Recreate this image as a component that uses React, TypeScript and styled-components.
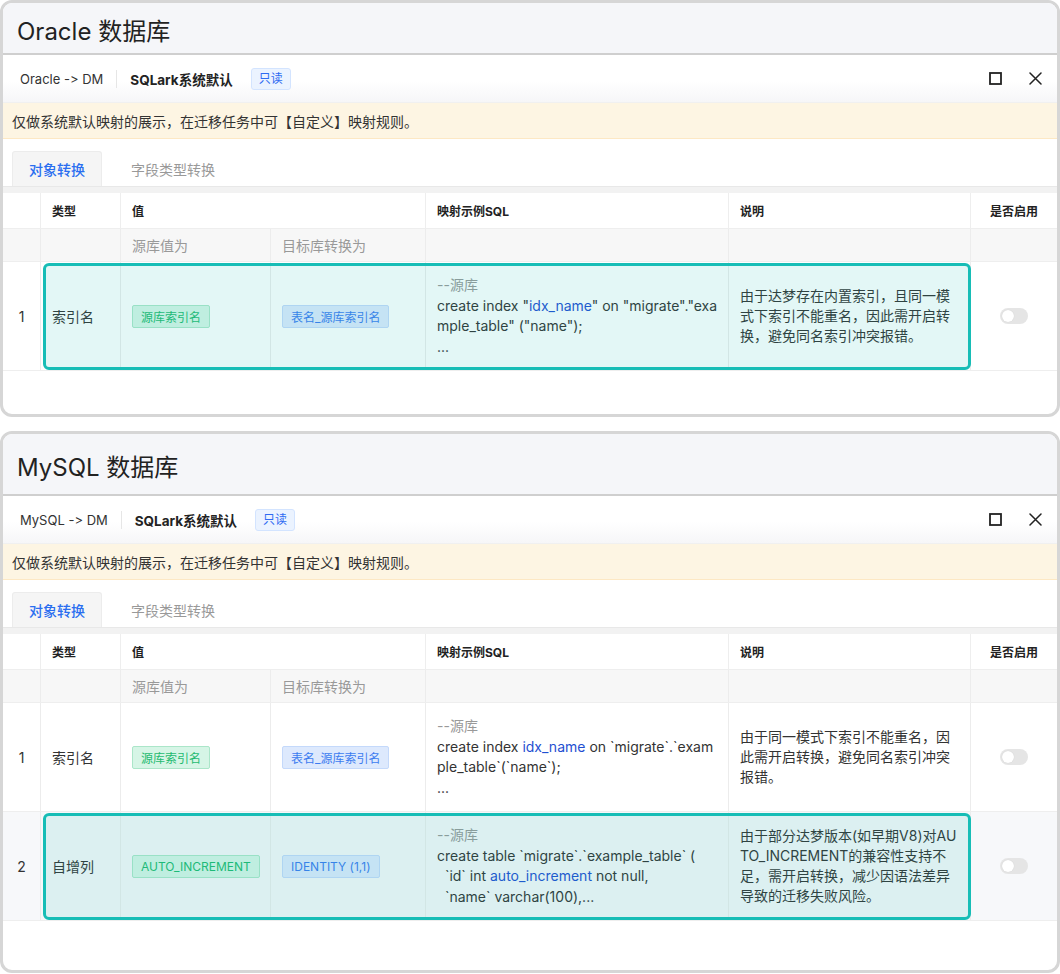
import React from 'react';
import styled, { createGlobalStyle } from 'styled-components';

const GlobalStyle = createGlobalStyle`
  * { box-sizing: border-box; }
  body {
    margin: 0;
    background: #ffffff;
    font-family: Inter, "Noto Sans CJK SC", sans-serif;
    font-feature-settings: "liga" 0, "calt" 0;
    color: #333;
  }
`;

type Row = {
  type: string;
  source: string;
  target: string;
  sql: React.ReactNode[];
  desc: string[];
  highlighted?: boolean;
  striped?: boolean;
};

type Section = {
  title: string;
  route: string;
  titleHeight: number;
  bottomGap: number;
  rows: Row[];
};

const Kw = styled.span`
  color: #1f4fd1;
`;

const sections: Section[] = [
  {
    title: 'Oracle 数据库',
    route: 'Oracle -> DM',
    titleHeight: 52,
    bottomGap: 43,
    rows: [
      {
        type: '索引名',
        source: '源库索引名',
        target: '表名_源库索引名',
        highlighted: true,
        sql: [
          <>create index "<Kw>idx_name</Kw>" on "migrate"."exa</>,
          <>mple_table" ("name");</>,
          <>...</>,
        ],
        desc: ['由于达梦存在内置索引，且同一模', '式下索引不能重名，因此需开启转', '换，避免同名索引冲突报错。'],
      },
    ],
  },
  {
    title: 'MySQL 数据库',
    route: 'MySQL -> DM',
    titleHeight: 62,
    bottomGap: 49,
    rows: [
      {
        type: '索引名',
        source: '源库索引名',
        target: '表名_源库索引名',
        sql: [
          <>create index <Kw>idx_name</Kw> on `migrate`.`exam</>,
          <>ple_table`(`name`);</>,
          <>...</>,
        ],
        desc: ['由于同一模式下索引不能重名，因', '此需开启转换，避免同名索引冲突', '报错。'],
      },
      {
        type: '自增列',
        source: 'AUTO_INCREMENT',
        target: 'IDENTITY (1,1)',
        highlighted: true,
        striped: true,
        sql: [
          <>create table `migrate`.`example_table` (</>,
          <>  `id` int <Kw>auto_increment</Kw> not null,</>,
          <>  `name` varchar(100),...</>,
        ],
        desc: ['由于部分达梦版本(如早期V8)对AU', 'TO_INCREMENT的兼容性支持不', '足，需开启转换，减少因语法差异', '导致的迁移失败风险。'],
      },
    ],
  },
];

const COLUMNS = '38px 80px 150px 155px 303px 242px 1fr';

export default function App() {
  return (
    <>
      <GlobalStyle />
      <Styled.Page>
        {sections.map((section) => (
          <Styled.Panel key={section.title}>
            <Styled.Title $height={section.titleHeight}>{section.title}</Styled.Title>

            <Styled.DialogHeader>
              <Styled.Route>{section.route}</Styled.Route>
              <Styled.Divider />
              <Styled.Strategy>SQLark系统默认</Styled.Strategy>
              <Styled.ReadOnly>只读</Styled.ReadOnly>
              <Styled.Actions>
                <svg width="13" height="13" viewBox="0 0 13 13">
                  <rect x="1" y="1" width="11" height="11" fill="none" stroke="#222" strokeWidth="1.8" />
                </svg>
                <svg width="13" height="13" viewBox="0 0 13 13">
                  <path d="M1 1 L12 12 M12 1 L1 12" stroke="#222" strokeWidth="1.5" strokeLinecap="round" />
                </svg>
              </Styled.Actions>
            </Styled.DialogHeader>

            <Styled.Notice>仅做系统默认映射的展示，在迁移任务中可【自定义】映射规则。</Styled.Notice>

            <Styled.Tabs>
              <Styled.Tab $active>对象转换</Styled.Tab>
              <Styled.Tab>字段类型转换</Styled.Tab>
            </Styled.Tabs>
            <Styled.Strip />

            <Styled.HeadRow>
              <Styled.HeadCell />
              <Styled.HeadCell>类型</Styled.HeadCell>
              <Styled.HeadCell $span={2}>值</Styled.HeadCell>
              <Styled.HeadCell>映射示例SQL</Styled.HeadCell>
              <Styled.HeadCell>说明</Styled.HeadCell>
              <Styled.HeadCell $center>是否启用</Styled.HeadCell>
            </Styled.HeadRow>
            <Styled.SubHeadRow>
              <Styled.SubCell />
              <Styled.SubCell />
              <Styled.SubCell>源库值为</Styled.SubCell>
              <Styled.SubCell>目标库转换为</Styled.SubCell>
              <Styled.SubCell />
              <Styled.SubCell />
              <Styled.SubCell />
            </Styled.SubHeadRow>

            {section.rows.map((row, i) => (
              <Styled.DataRow key={row.type} $striped={row.striped}>
                <Styled.Cell $center>{i + 1}</Styled.Cell>
                <Styled.Cell>{row.type}</Styled.Cell>
                <Styled.Cell>
                  <Styled.Tag $tone="green">{row.source}</Styled.Tag>
                </Styled.Cell>
                <Styled.Cell>
                  <Styled.Tag $tone="blue">{row.target}</Styled.Tag>
                </Styled.Cell>
                <Styled.Cell>
                  <Styled.Code>
                    <Styled.Comment>--源库</Styled.Comment>
                    {row.sql.map((line, j) => (
                      <Styled.CodeLine key={j}>{line}</Styled.CodeLine>
                    ))}
                  </Styled.Code>
                </Styled.Cell>
                <Styled.Cell>
                  <Styled.Desc>
                    {row.desc.map((line) => (
                      <div key={line}>{line}</div>
                    ))}
                  </Styled.Desc>
                </Styled.Cell>
                <Styled.Cell $center>
                  <Styled.Switch>
                    <Styled.Knob />
                  </Styled.Switch>
                </Styled.Cell>
                {row.highlighted && <Styled.Highlight />}
              </Styled.DataRow>
            ))}

            <Styled.Spacer $height={section.bottomGap} />
          </Styled.Panel>
        ))}
      </Styled.Page>
    </>
  );
}

const Styled = {
  Page: styled.main`
    display: flex;
    flex-direction: column;
    gap: 14px;
    width: 1060px;
  `,

  Panel: styled.section`
    display: flex;
    flex-direction: column;
    border: 3px solid #d6d6d6;
    border-radius: 12px;
    overflow: hidden;
    background: #fff;
  `,

  Title: styled.h2<{ $height: number }>`
    display: flex;
    align-items: center;
    height: ${({ $height }) => $height}px;
    margin: 0;
    padding: 2px 0 0 14px;
    background: #f5f6f9;
    border-bottom: 2px solid #cfcfcf;
    font-size: 24px;
    font-weight: 400;
    color: #222;
  `,

  DialogHeader: styled.div`
    display: flex;
    align-items: center;
    height: 48px;
    padding: 0 15px 0 17px;
    background: linear-gradient(#ffffff 55%, #f6f6f8);
    border-bottom: 1px solid #f0f0f0;
  `,

  Route: styled.span`
    font-size: 13px;
    color: #333;
  `,

  Divider: styled.span`
    width: 1px;
    height: 18px;
    margin: 0 13px 0 13px;
    background: #e6e6e6;
  `,

  Strategy: styled.span`
    font-size: 13.5px;
    font-weight: 700;
    color: #222;
  `,

  ReadOnly: styled.span`
    margin-left: 18px;
    padding: 2px 7px;
    font-size: 12px;
    line-height: 16px;
    color: #2f6bf2;
    background: #ebf3ff;
    border: 1px solid #d3e4ff;
    border-radius: 3px;
  `,

  Actions: styled.div`
    display: flex;
    align-items: center;
    gap: 27px;
    margin-left: auto;
  `,

  Notice: styled.div`
    display: flex;
    align-items: center;
    height: 36px;
    padding-left: 9px;
    font-size: 14px;
    color: #333;
    background: #fdf5e3;
    border-bottom: 1px solid #fde8c4;
  `,

  Tabs: styled.div`
    display: flex;
    padding: 12px 9px 0;
  `,

  Tab: styled.div<{ $active?: boolean }>`
    display: flex;
    align-items: center;
    height: 35px;
    padding: 0 16px;
    margin-right: 12px;
    font-size: 14px;
    font-weight: ${({ $active }) => ($active ? 500 : 400)};
    color: ${({ $active }) => ($active ? '#2a6ef0' : '#999')};
    background: ${({ $active }) => ($active ? '#f5f5f5' : 'transparent')};
    border: 1px solid ${({ $active }) => ($active ? '#ececec' : 'transparent')};
    border-bottom: none;
    border-radius: 3px 3px 0 0;
  `,

  Strip: styled.div`
    height: 7px;
    background: #f2f2f2;
    border-top: 1px solid #e8e8e8;
  `,

  HeadRow: styled.div`
    display: grid;
    grid-template-columns: ${COLUMNS};
    height: 36px;
    border-bottom: 1px solid #eeeeee;
  `,

  HeadCell: styled.div<{ $span?: number; $center?: boolean }>`
    display: flex;
    align-items: center;
    justify-content: ${({ $center }) => ($center ? 'center' : 'flex-start')};
    grid-column: span ${({ $span }) => $span ?? 1};
    padding: 0 11px;
    font-size: 12px;
    font-weight: 700;
    color: #222;
    border-right: 1px solid #eeeeee;

    &:last-child {
      border-right: none;
    }
  `,

  SubHeadRow: styled.div`
    display: grid;
    grid-template-columns: ${COLUMNS};
    height: 33px;
    background: #f7f7f7;
    border-bottom: 1px solid #eeeeee;
  `,

  SubCell: styled.div`
    display: flex;
    align-items: center;
    padding: 0 11px;
    font-size: 14px;
    color: #999;
    border-right: 1px solid #ececec;

    &:last-child {
      border-right: none;
    }
  `,

  DataRow: styled.div<{ $striped?: boolean }>`
    display: grid;
    grid-template-columns: ${COLUMNS};
    min-height: 109px;
    background: ${({ $striped }) => ($striped ? '#f7f8fa' : '#ffffff')};
    border-bottom: 1px solid #eeeeee;

    ${[1, 2, 3, 4, 5, 6, 7].map((n) => `& > :nth-child(${n}) { grid-column: ${n}; }`).join('\n')}
  `,

  Cell: styled.div<{ $center?: boolean }>`
    display: flex;
    align-items: center;
    justify-content: ${({ $center }) => ($center ? 'center' : 'flex-start')};
    grid-row: 1;
    padding: 0 11px;
    font-size: 14px;
    color: #333;
    border-right: 1px solid #ececec;

    &:nth-child(7) {
      border-right: none;
    }
  `,

  Tag: styled.span<{ $tone: 'green' | 'blue' }>`
    display: inline-flex;
    align-items: center;
    height: 23px;
    padding: 0 8px;
    font-size: 12px;
    border-radius: 2px;
    white-space: nowrap;
    color: ${({ $tone }) => ($tone === 'green' ? '#1fba70' : '#3c7cf0')};
    background: ${({ $tone }) => ($tone === 'green' ? '#d6f5e6' : '#dde9fd')};
    border: 1px solid ${({ $tone }) => ($tone === 'green' ? '#abe6c9' : '#c4d9fb')};
  `,

  Code: styled.div`
    font-size: 14px;
    line-height: 20.5px;
    color: #333;
  `,

  Comment: styled.div`
    color: #999;
  `,

  CodeLine: styled.div`
    white-space: pre;
  `,

  Desc: styled.div`
    font-size: 14px;
    line-height: 20px;
    color: #333;
    white-space: nowrap;
  `,

  Switch: styled.span`
    display: inline-flex;
    align-items: center;
    width: 28px;
    height: 16px;
    padding: 2px;
    background: #e5e5e5;
    border-radius: 8px;
  `,

  Knob: styled.span`
    width: 12px;
    height: 12px;
    border-radius: 50%;
    background: #ffffff;
    box-shadow: 0 0 1px rgba(0, 0, 0, 0.15);
  `,

  Highlight: styled.div`
    grid-row: 1;
    grid-column: 2 / 7;
    margin: 1px 0 0 2px;
    border: 3px solid #17bdb6;
    border-radius: 6px;
    background: rgba(23, 189, 182, 0.12);
    pointer-events: none;
    z-index: 1;
  `,

  Spacer: styled.div<{ $height: number }>`
    height: ${({ $height }) => $height}px;
  `,
};
